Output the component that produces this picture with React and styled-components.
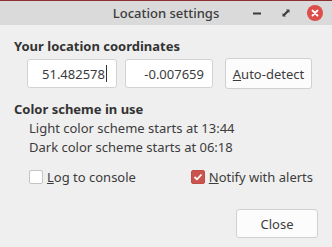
import React from 'react';
import styled, { createGlobalStyle } from 'styled-components';

const Global = createGlobalStyle`
  html, body { margin: 0; padding: 0; }
  body {
    background: #efefef;
    font-family: "Noto Sans", "Open Sans", sans-serif;
    color: #3c3c3c;
  }
`;

const Window = styled.div`
  width: 332px;
  height: 247px;
  display: flex;
  flex-direction: column;
  background: #efefef;
  box-sizing: border-box;
  border-top: 1px solid #8c3030;
`;

const TitleBar = styled.div`
  height: 24px;
  background: #dadada;
  display: grid;
  grid-template-columns: 1fr auto 1fr;
  align-items: center;
`;

const Title = styled.div`
  grid-column: 2;
  font-size: 13px;
  font-weight: 500;
  color: #3c3c3c;
`;

const Controls = styled.div`
  grid-column: 3;
  justify-self: end;
  display: flex;
  align-items: center;
  gap: 13px;
  padding-right: 9px;
`;

const CtlBtn = styled.span`
  width: 16px;
  height: 16px;
  display: flex;
  align-items: center;
  justify-content: center;
  border-radius: 50%;
  background: ${p => (p.$close ? '#dd4d49' : 'transparent')};
`;

const Body = styled.div`
  flex: 1;
  display: flex;
  flex-direction: column;
  padding: 13px 14px 0 14px;
`;

const Heading = styled.div`
  font-size: 13px;
  font-weight: 700;
  line-height: 16px;
  color: #333;
`;

const CoordRow = styled.div`
  display: flex;
  gap: 8px;
  margin: 4px 0 0 13px;
  align-items: center;
`;

const Field = styled.div`
  width: ${p => p.$w}px;
  height: 29px;
  box-sizing: border-box;
  background: #fff;
  border: 1px solid #d2d2d2;
  border-radius: 3px;
  display: flex;
  align-items: center;
  justify-content: flex-end;
  padding-right: ${p => p.$pr}px;
  font-size: 13px;
  color: #3c3c3c;
`;

const Caret = styled.span`
  display: inline-block;
  width: 1px;
  height: 17px;
  background: #333;
  margin-left: 1px;
`;

const Button = styled.div`
  width: ${p => p.$w}px;
  height: ${p => p.$h || 31}px;
  box-sizing: border-box;
  background: #fcfcfc;
  border: 1px solid #d0d0d0;
  border-radius: 3px;
  display: flex;
  align-items: center;
  justify-content: center;
  font-size: 13px;
  color: #3c3c3c;
  margin-left: ${p => p.$ml || 0}px;
`;

const Section = styled.div`
  margin-top: 12px;
`;

const Lines = styled.div`
  display: flex;
  flex-direction: column;
  gap: 2px;
  margin-top: 3px;
  padding-left: 15px;
`;

const Line = styled.div`
  font-size: 13px;
  line-height: 17px;
  color: #3c3c3c;
`;

const CheckRow = styled.div`
  display: flex;
  justify-content: space-between;
  margin: 12px 5px 0 15px;
`;

const Check = styled.label`
  display: flex;
  align-items: center;
  gap: 4px;
  font-size: 13px;
  line-height: 18px;
  color: #3c3c3c;
`;

const Box = styled.span`
  width: 14px;
  height: 14px;
  box-sizing: border-box;
  border-radius: 2px;
  border: 1px solid ${p => (p.$on ? '#c24d47' : '#c4c4c4')};
  background: ${p => (p.$on ? '#c9534d' : '#fff')};
  display: flex;
  align-items: center;
  justify-content: center;
`;

const Footer = styled.div`
  display: flex;
  justify-content: flex-end;
  margin-top: 23px;
`;

export default function App() {
  return (
    <>
      <Global />
      <Window>
        <TitleBar>
          <Title>Location settings</Title>
          <Controls>
            <CtlBtn>
              <svg width="8" height="3"><rect width="8" height="2" y="0.5" fill="#3a3a3a" /></svg>
            </CtlBtn>
            <CtlBtn>
              <svg width="8" height="8" viewBox="0 0 8 8">
                <path d="M0.5 4 L0.5 7.5 L4 7.5 Z M4 0.5 L7.5 0.5 L7.5 4 Z" fill="#3a3a3a" />
                <path d="M2 6 L6 2" stroke="#3a3a3a" strokeWidth="2.2" />
              </svg>
            </CtlBtn>
            <CtlBtn $close>
              <svg width="8" height="8" viewBox="0 0 8 8">
                <path d="M1.5 1.5 L6.5 6.5 M6.5 1.5 L1.5 6.5" stroke="#fff" strokeWidth="1.8" strokeLinecap="round" />
              </svg>
            </CtlBtn>
          </Controls>
        </TitleBar>
        <Body>
          <Heading>Your location coordinates</Heading>
          <CoordRow>
            <Field $w={90} $pr={9}>51.482578<Caret /></Field>
            <Field $w={88} $pr={8}>-0.007659</Field>
            <Button $w={87} $ml={4}><span><u>A</u>uto-detect</span></Button>
          </CoordRow>
          <Section>
            <Heading>Color scheme in use</Heading>
            <Lines>
              <Line>Light color scheme starts at 13:44</Line>
              <Line>Dark color scheme starts at 06:18</Line>
            </Lines>
          </Section>
          <CheckRow>
            <Check>
              <Box />
              <span><u>L</u>og to console</span>
            </Check>
            <Check>
              <Box $on>
                <svg width="10" height="8" viewBox="0 0 10 8">
                  <path d="M1.5 4 L4 6.3 L8.5 1.5" stroke="#fff" strokeWidth="1.8" fill="none" />
                </svg>
              </Box>
              <span><u>N</u>otify with alerts</span>
            </Check>
          </CheckRow>
          <Footer>
            <Button $w={82} $h={29}>Close</Button>
          </Footer>
        </Body>
      </Window>
    </>
  );
}
